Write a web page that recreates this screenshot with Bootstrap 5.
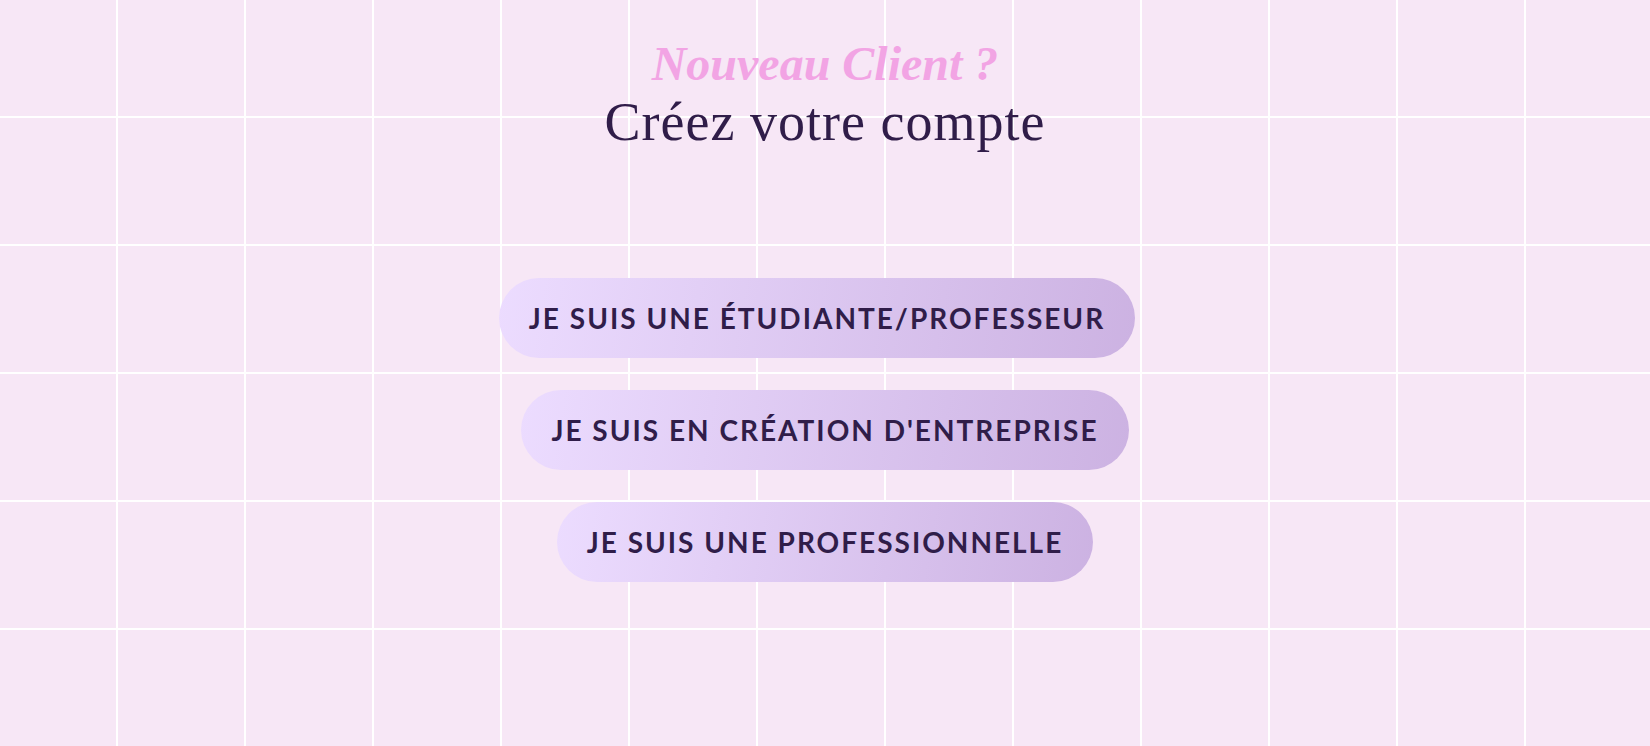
<!DOCTYPE html>
<html lang="fr">
<head>
<meta charset="utf-8">
<meta name="viewport" content="width=device-width, initial-scale=1">
<title>Créez votre compte</title>
<link href="https://cdn.jsdelivr.net/npm/bootstrap@5.3.0/dist/css/bootstrap.min.css" rel="stylesheet">
<style>
  body {
    color: #301d49;
    background-color: #f7e7f6;
    /* white 2px grid, one line every 128px */
    background-image:
      linear-gradient(#fff 2px, transparent 2px),
      linear-gradient(90deg, #fff 2px, transparent 2px);
    background-size: 128px 128px;
    background-position: 116px 116px;
  }
  .signup { padding-top: 32px; }
  .eyebrow {
    color: #f2a4e4;
    font: italic 700 48px/64px "Liberation Serif", serif;
  }
  .headline {
    font: 400 54px/52px "Liberation Serif", serif;
    letter-spacing: 1px;
  }
  .choices { gap: 32px; margin-top: 130px; }
  .btn-choice {
    --bs-btn-color: #301d49;
    --bs-btn-hover-color: #301d49;
    --bs-btn-active-color: #301d49;
    --bs-btn-border-width: 0;
    --bs-btn-padding-x: 30px;
    --bs-btn-padding-y: 20px;
    --bs-btn-font-family: Lato, sans-serif;
    --bs-btn-font-size: 28px;
    --bs-btn-font-weight: 700;
    --bs-btn-line-height: 40px;
    letter-spacing: 2px;
    background-image: linear-gradient(100deg, #ecdcff, #ccb2e2);
  }
</style>
</head>
<body class="min-vh-100">
<main class="signup container-fluid text-center pb-5">
  <h1 class="m-0">
    <span class="eyebrow d-block">Nouveau Client ?</span>
    <span class="headline d-block">Créez votre compte</span>
  </h1>
  <nav class="choices d-flex flex-column align-items-center" aria-label="Type de compte">
    <a class="btn btn-choice rounded-pill me-3" href="#etudiante">JE SUIS UNE ÉTUDIANTE/PROFESSEUR</a>
    <a class="btn btn-choice rounded-pill" href="#creation">JE SUIS EN CRÉATION D'ENTREPRISE</a>
    <a class="btn btn-choice rounded-pill" href="#professionnelle">JE SUIS UNE PROFESSIONNELLE</a>
  </nav>
</main>
<script src="https://cdn.jsdelivr.net/npm/bootstrap@5.3.0/dist/js/bootstrap.bundle.min.js"></script>
</body>
</html>
